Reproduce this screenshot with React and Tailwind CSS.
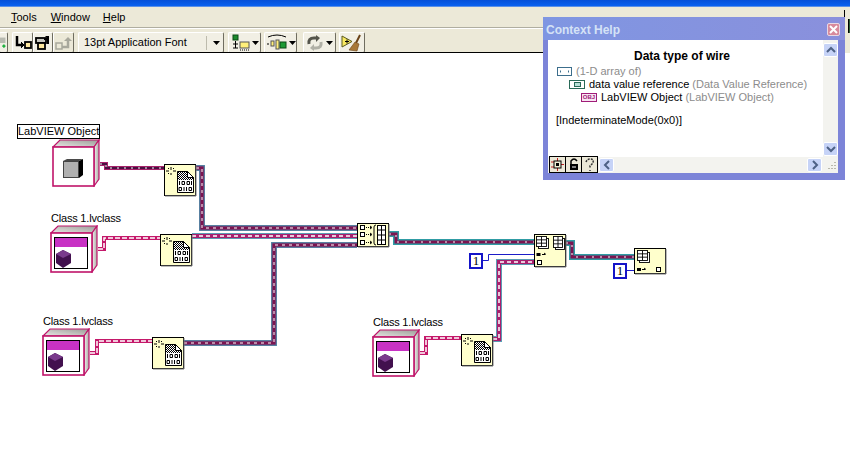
import React from "react";

const WIRE_STYLES = {
  objDark: [
    ["#a8206a", 4, ""],
    ["#4a1040", 2, ""],
    ["#ffffff", 1, "2 5"],
  ],
  obj: [
    ["#c4186a", 4, ""],
    ["#ffffff", 1.5, "5 2"],
  ],
  dvr: [
    ["#4fa0b4", 6, ""],
    ["#62608e", 5, ""],
    ["#7c1450", 3, ""],
    ["#ffffff", 1, "3 4"],
  ],
  dvrLight: [
    ["#5a9cb4", 6, ""],
    ["#a8206e", 4, ""],
    ["#ffffff", 1.5, "4 3"],
  ],
  array: [
    ["#2f9ca4", 6, ""],
    ["#7c1450", 3, ""],
    ["#ffffff", 1, "2 6"],
  ],
};

const Wire = ({ points, kind }) => (
  <>
    {WIRE_STYLES[kind].map(([color, width, dash], i) => (
      <polyline
        key={i}
        points={points}
        fill="none"
        stroke={color}
        strokeWidth={width}
        strokeDasharray={dash}
        strokeLinejoin="miter"
      />
    ))}
  </>
);

const Cube = ({ className, isClass }) => (
  <svg className={className} width="48" height="48" viewBox="0 0 48 48">
    <defs>
      <linearGradient id="sideFace" x1="0" y1="0" x2="1" y2="0">
        <stop offset="0" stopColor="#f2f2ee" />
        <stop offset="1" stopColor="#a9a9a4" />
      </linearGradient>
      <linearGradient id="topFace" x1="0" y1="1" x2="1" y2="0">
        <stop offset="0" stopColor="#e8e8e4" />
        <stop offset="1" stopColor="#9c9c98" />
      </linearGradient>
    </defs>
    <polygon points="1,8 8,1 47,1 42,8" fill="url(#topFace)" stroke="#c0146a" strokeWidth="1.2" />
    <polygon points="42,8 47,1 47,40 42,47" fill="url(#sideFace)" stroke="#c0146a" strokeWidth="1.2" />
    <rect x="1" y="8" width="41" height="39" fill="#ffffff" stroke="#c0146a" strokeWidth="1.6" />
    {isClass ? (
      <>
        <rect x="4.5" y="12.5" width="33" height="31" fill="#ffffff" stroke="#000000" />
        <rect x="5" y="13" width="32" height="9" fill="#c832c4" />
        <polygon points="13,25 21,29 21,38 13,43 6,38 6,29" fill="#42104e" />
        <polygon points="13,25 21,29 13,33 6,29" fill="#7a3a8c" />
      </>
    ) : (
      <>
        <polygon points="11,22 15,20 31,20 27,22" fill="#4a4a4a" />
        <polygon points="27,22 31,20 31,36 27,39" fill="#000000" />
        <rect x="11.5" y="22.5" width="15" height="16" fill="#b0b0b0" stroke="#444444" />
      </>
    )}
  </svg>
);

const DocNode = ({ className }) => (
  <svg className={className} width="33" height="33" viewBox="0 0 33 33">
    <defs>
      <pattern id="dither" width="2" height="2" patternUnits="userSpaceOnUse">
        <rect width="2" height="2" fill="#ffffff" />
        <rect width="1" height="1" fill="#000000" />
        <rect x="1" y="1" width="1" height="1" fill="#000000" />
      </pattern>
    </defs>
    <rect x="0.5" y="0.5" width="31" height="31" fill="#ffffcc" stroke="#000000" />
    <path d="M32 1V32H1" stroke="#777777" fill="none" />
    <path d="M7 3V6M7 9V11M2 7H5M9 7H12M4 4L5 5M10 4L9 5M4 10L5 9" stroke="#000000" />
    <polygon points="13.5,7.5 23.5,7.5 29.5,13.5 29.5,28.5 13.5,28.5" fill="url(#dither)" stroke="#000000" />
    <rect x="14" y="16" width="15" height="12" fill="#ffffff" />
    <path d="M15.500 17V21M18 17.500H20.500V20.500H18ZM23 17.500H25.500V20.500H23ZM27.500 17V21M15 23.500H17.500V26.500H15ZM20 23V27M22.500 23V27M25 23.500H27.500V26.500H25Z" stroke="#000000" fill="none" />
    <polygon points="23.5,7.5 29.5,13.5 23.5,13.5" fill="#ffffff" stroke="#000000" />
  </svg>
);

const Grid = ({ x, y, w = 10, h = 10 }) => (
  <g stroke="#000000" fill="#ffffff" strokeWidth="0.9">
    <rect x={x + 2} y={y + 2} width={w} height={h} />
    <rect x={x} y={y} width={w} height={h} />
    <path d={`M${x} ${y + h / 3}H${x + w}M${x} ${y + (2 * h) / 3}H${x + w}M${x + w / 2} ${y}V${y + h}`} />
  </g>
);

const BuildArrayNode = ({ className }) => (
  <svg className={className} width="33" height="25" viewBox="0 0 33 25">
    <rect x="0.5" y="0.5" width="31" height="23" fill="#ffffcc" stroke="#000000" />
    <path d="M32 1V24H1" stroke="#777777" fill="none" />
    <g fill="#ffffff" stroke="#000000">
      <rect x="3.5" y="2.5" width="4" height="4" />
      <rect x="3.5" y="9.5" width="4" height="4" />
      <rect x="3.5" y="17.5" width="4" height="4" />
    </g>
    <path d="M9 4.5H14M9 11.5H14M9 19.5H14" stroke="#000000" strokeDasharray="1 1" />
    <path d="M13 3l2 1.500-2 1.500M13 10l2 1.500-2 1.500M13 18l2 1.500-2 1.500" stroke="#000000" fill="none" />
    <path d="M19 2Q17 2 17 4V20Q17 22 19 22" stroke="#000000" fill="none" />
    <rect x="20.500" y="2.500" width="8" height="19" fill="#ffffff" stroke="#000000" />
    <path d="M20 7H29M20 12H29M20 17H29M24.500 3V21" stroke="#000000" />
  </svg>
);

const ReshapeNode = ({ className }) => (
  <svg className={className} width="33" height="34" viewBox="0 0 33 34">
    <rect x="0.5" y="0.5" width="31" height="32" fill="#ffffcc" stroke="#000000" />
    <path d="M32 1V33H1" stroke="#777777" fill="none" />
    <Grid x={2.500} y={2.500} />
    <Grid x={19.500} y={2.500} w={9} h={11} />
    <rect x="2.500" y="19" width="4" height="3" fill="#000000" />
    <path d="M8 20.500H11M10 19l2 1.500" stroke="#000000" fill="none" />
    <rect x="3.500" y="26.500" width="4" height="4" fill="#ffffff" stroke="#000000" />
  </svg>
);

const IndexNode = ({ className }) => (
  <svg className={className} width="33" height="27" viewBox="0 0 33 27">
    <rect x="0.5" y="0.5" width="31" height="25" fill="#ffffcc" stroke="#000000" />
    <path d="M32 1V26H1" stroke="#777777" fill="none" />
    <Grid x={3.500} y={2.500} />
    <rect x="3" y="20" width="4" height="3" fill="#000000" />
    <path d="M8 21.500H11M10 20l2 1.500" stroke="#000000" fill="none" />
    <rect x="22.500" y="19.500" width="4" height="4" fill="#ffffff" stroke="#000000" />
  </svg>
);

const Label = ({ className, children }) => (
  <span className={`absolute text-[11px] tracking-[-0.2px] leading-[15px] text-black whitespace-nowrap ${className}`}>
    {children}
  </span>
);

const NumConst = ({ className }) => (
  <div
    className={`absolute w-[14px] h-[16px] border-2 border-[#1414c8] bg-white flex items-center justify-center text-[13px] font-['Liberation_Serif',serif] text-black ${className}`}
  >
    1
  </div>
);

const ToolButton = ({ className = "", children }) => (
  <div
    className={`h-[21px] flex items-center justify-center rounded-[2px] border-t border-l border-white border-r border-b border-r-[#6f6d60] border-b-[#44423a] bg-[#f1efe4] ${className}`}
  >
    {children}
  </div>
);

const Caret = () => (
  <svg width="7" height="4" viewBox="0 0 7 4">
    <polygon points="0,0 7,0 3.500,4" fill="#000000" />
  </svg>
);

const Toolbar = () => (
  <div className="h-[24px] bg-[#ece9d8] flex items-start pt-[3px] border-t border-t-white">
    <ToolButton className="w-[9px] -ml-px overflow-hidden">
      <svg width="9" height="18" viewBox="0 0 9 18">
        <rect x="0" y="2" width="7" height="7" fill="#b8bab0" />
        <path d="M3 13H7M5 11V15" stroke="#20b040" strokeWidth="2" />
      </svg>
    </ToolButton>
    <div className="w-[4px]" />
    <ToolButton className="w-[21px]">
      <svg width="18" height="16" viewBox="0 0 18 16">
        <path d="M3 1V10H8" stroke="#000000" strokeWidth="2.500" fill="none" />
        <path d="M7 7l3 3-3 3" fill="#000000" stroke="#000000" />
        <rect x="11" y="7" width="6" height="6" fill="#ffe9a0" stroke="#000000" strokeWidth="1.800" />
      </svg>
    </ToolButton>
    <ToolButton className="w-[20px]">
      <svg width="18" height="16" viewBox="0 0 18 16">
        <rect x="2" y="3" width="10" height="5" fill="#c8c8c0" stroke="#000000" strokeWidth="1.800" />
        <rect x="4" y="8" width="7" height="6" fill="#ffe9a0" stroke="#000000" strokeWidth="1.800" />
        <path d="M10 4H14V9" stroke="#000000" strokeWidth="2" fill="none" />
        <path d="M11 1l4-0v4z" fill="#000000" />
      </svg>
    </ToolButton>
    <ToolButton className="w-[21px] border-transparent bg-transparent">
      <svg width="18" height="16" viewBox="0 0 18 16">
        <rect x="1" y="8" width="6" height="6" fill="none" stroke="#a8a89c" strokeWidth="1.500" />
        <path d="M7 12H13V5" stroke="#a8a89c" strokeWidth="2.500" fill="none" />
        <path d="M9 6l4-4 4 4z" fill="#a8a89c" />
      </svg>
    </ToolButton>
    <div className="w-[4px]" />
    <ToolButton className="w-[146px] pl-[5px] pr-[3px]">
      <span className="text-[11px] text-black whitespace-nowrap">13pt Application Font</span>
      <span className="ml-auto flex items-center gap-[6px]">
        <span className="w-px h-[14px] bg-[#bdbbad]" />
        <Caret />
      </span>
    </ToolButton>
    <div className="w-[4px]" />
    <ToolButton className="w-[33px] gap-[1px]">
      <svg width="20" height="17" viewBox="0 0 20 17">
        <rect x="2" y="1" width="5" height="5" fill="#1c8a2c" stroke="#0a4a14" />
        <path d="M4.500 7V14M2 10H7M2 14H7" stroke="#000000" />
        <rect x="9" y="8" width="9" height="6" fill="#fff07a" stroke="#555555" />
        <path d="M9 16H18" stroke="#000000" strokeDasharray="1 1" />
      </svg>
      <Caret />
    </ToolButton>
    <div className="w-[3px]" />
    <ToolButton className="w-[33px] gap-[1px]">
      <svg width="22" height="17" viewBox="0 0 22 17">
        <path d="M2 3Q11 -1 20 3" stroke="#000000" fill="none" />
        <rect x="5" y="7" width="3" height="5" fill="#fff07a" stroke="#555555" />
        <rect x="10" y="6" width="3" height="9" fill="#fff07a" stroke="#555555" />
        <rect x="14" y="8" width="6" height="6" fill="#1c9a34" stroke="#0a4a14" />
        <path d="M1 10H3" stroke="#000000" />
      </svg>
      <Caret />
    </ToolButton>
    <div className="w-[6px]" />
    <ToolButton className="w-[33px] gap-[2px]">
      <svg width="18" height="16" viewBox="0 0 18 16">
        <path d="M3 9Q2 3 8 3H11" stroke="#55554c" strokeWidth="3" fill="none" />
        <path d="M10 0V7L14 3z" fill="#55554c" />
        <path d="M15 7Q16 13 10 13H7" stroke="#b0b0a6" strokeWidth="3" fill="none" />
        <path d="M8 9V16L4 13z" fill="#b0b0a6" />
      </svg>
      <Caret />
    </ToolButton>
    <div className="w-[3px]" />
    <ToolButton className="w-[26px]">
      <svg width="22" height="18" viewBox="0 0 22 18">
        <polygon points="1,2 1,13 11,7.500" fill="#f8e860" stroke="#5a5a20" />
        <path d="M4 7.500H8M6 5.500V9.500" stroke="#000000" />
        <path d="M19 1L15 9" stroke="#6a4218" strokeWidth="2" />
        <polygon points="14,8 18,10 16,17 8,16" fill="#a87838" stroke="#6a4218" strokeWidth="0.6" />
      </svg>
    </ToolButton>
  </div>
);

const HelpIcon = ({ className, border, children }) => (
  <span
    className={`absolute h-[9px] border flex items-center justify-center ${border} ${className}`}
  >
    {children}
  </span>
);

const ScrollArrow = ({ className, d }) => (
  <div className={`absolute flex items-center justify-center rounded-[2px] border border-white bg-[#c6d3f7] ${className}`}>
    <svg width="10" height="10" viewBox="0 0 10 10">
      <path d={d} stroke="#4d6185" strokeWidth="2" fill="none" />
    </svg>
  </div>
);

const ContextHelp = () => (
  <div className="absolute left-[543px] top-[17px] w-[302px] h-[163px] bg-[#7c84d8] rounded-t-[4px] font-['Liberation_Sans',sans-serif]">
    <div className="h-[23px] flex items-center justify-between pl-[3px] pr-[5px] pt-[2px] bg-gradient-to-r from-[#7f96e2] to-[#8a90dc]">
      <span className="text-[12px] font-bold text-[#d5e2f6]">Context Help</span>
      <div className="w-[13px] h-[13px] rounded-[2px] bg-[#d88a9c] border border-[#e8d8e4] flex items-center justify-center">
        <svg width="9" height="9" viewBox="0 0 9 9">
          <path d="M1 1L8 8M8 1L1 8" stroke="#ffffff" strokeWidth="2" />
        </svg>
      </div>
    </div>
    <div className="absolute left-[5px] top-[23px] w-[290px] h-[133px] bg-white text-[11px] leading-[15px] text-black overflow-hidden">
      <div className="absolute left-0 w-[265px] top-[9px] text-center text-[12px] font-bold pl-[3px]">
        Data type of wire
      </div>
      <HelpIcon className="left-[9px] top-[27px] w-[15px]" border="border-[#3c6e8c]">
        <span className="w-[9px] h-[3px] border border-x-[#3c6e8c] border-y-transparent" />
      </HelpIcon>
      <span className="absolute left-[28px] top-[24px] text-[#8c8c8c] whitespace-nowrap">(1-D array of)</span>
      <HelpIcon className="left-[21px] top-[40px] w-[16px]" border="border-[#2a6a58]">
        <span className="w-[7px] h-[5px] bg-[#b8e0d8] border border-[#2a6a58]" />
      </HelpIcon>
      <span className="absolute left-[41px] top-[37px] whitespace-nowrap">
        data value reference <span className="text-[#8c8c8c]">(Data Value Reference)</span>
      </span>
      <HelpIcon className="left-[33px] top-[53px] w-[16px] bg-[#f8e4f2] text-[6px] leading-[7px] font-bold text-[#a01c78] overflow-hidden" border="border-[#a01c78]">
        OBJ
      </HelpIcon>
      <span className="absolute left-[53px] top-[50px] whitespace-nowrap">
        LabVIEW Object <span className="text-[#8c8c8c]">(LabVIEW Object)</span>
      </span>
      <span className="absolute left-[8px] top-[73px] whitespace-nowrap">[IndeterminateMode(0x0)]</span>

      <div className="absolute left-[275px] top-0 w-[15px] h-[133px] bg-[#f3f3ef]" />
      <ScrollArrow className="left-[275px] top-[3px] w-[15px] h-[14px]" d="M1 7L5 3L9 7" />
      <ScrollArrow className="left-[275px] top-[102px] w-[15px] h-[14px]" d="M1 3L5 7L9 3" />

      <div className="absolute left-0 top-[117px] w-[290px] h-[16px] bg-[#f3f3ef]" />
      <div className="absolute left-[1px] top-[116px] w-[49px] h-[17px] flex border border-black bg-[#ece9d8]">
        <div className="flex-1 border-r border-black flex items-center justify-center">
          <svg width="13" height="13" viewBox="0 0 13 13">
            <path d="M0 4H3M0 9H3M10 6.500H13M6.500 0V13" stroke="#c02020" />
            <rect x="3" y="3" width="7" height="7" fill="#f0f0d8" stroke="#000000" />
            <rect x="5" y="5" width="3" height="3" fill="#000000" />
          </svg>
        </div>
        <div className="flex-1 border-r border-black flex items-center justify-center">
          <svg width="12" height="13" viewBox="0 0 12 13">
            <path d="M3 6V3Q6 -1 9 3" stroke="#000000" strokeWidth="1.500" fill="none" />
            <rect x="2" y="6" width="8" height="6" fill="#000000" />
            <path d="M4 9H8" stroke="#ffffff" />
          </svg>
        </div>
        <div className="flex-1 flex items-center justify-center">
          <svg width="12" height="14" viewBox="0 0 12 14">
            <path d="M2 4Q3 1 6 1Q10 1 9 5L6 8V10M6 12V13" stroke="#333333" strokeWidth="1.500" strokeDasharray="2 1" fill="none" />
          </svg>
        </div>
      </div>
      <ScrollArrow className="left-[51px] top-[118px] w-[15px] h-[14px]" d="M7 1L3 5L7 9" />
      <ScrollArrow className="left-[259px] top-[118px] w-[15px] h-[14px]" d="M3 1L7 5L3 9" />
      <svg className="absolute left-[279px] top-[121px]" width="10" height="10" viewBox="0 0 10 10">
        <path d="M8 1V2M5 4V5M8 4V5M2 7V8M5 7V8M8 7V8" stroke="#b8b8ac" strokeWidth="2" />
      </svg>
    </div>
  </div>
);

export default function App() {
  return (
    <div className="relative w-[850px] h-[451px] overflow-hidden bg-white flex flex-col font-['Liberation_Sans',sans-serif]">
      <div className="h-[7px] bg-gradient-to-b from-[#0550d8] to-[#0a62f0] border-b border-b-[#5a90e8]" />
      <div className="h-[21px] bg-[#ece9d8] flex items-center text-[11px] text-black border-b border-b-[#b0aea0]">
        <span className="ml-[11px]"><u>T</u>ools</span>
        <span className="ml-[14px]"><u>W</u>indow</span>
        <span className="ml-[13px]"><u>H</u>elp</span>
      </div>
      <Toolbar />
      <div className="h-px bg-black" />

      <div className="relative flex-1">
        <svg className="absolute left-0 top-0" width="850" height="398" viewBox="0 53 850 398">
          <Wire kind="objDark" points="100,164 106,164 106,168 164,168" />
          <Wire kind="dvr" points="196,168 202,168 202,228 357,228" />
          <Wire kind="obj" points="98,249 104,249 104,238 160,238" />
          <Wire kind="dvrLight" points="192,236 357,236" />
          <Wire kind="obj" points="90,353 97,353 97,341 152,341" />
          <Wire kind="dvr" points="184,343 274,343 274,245 357,245" />
          <Wire kind="array" points="389,234 396,234 396,242 534,242" />
          <Wire kind="obj" points="420,353 426,353 426,338 461,338" />
          <Wire kind="dvrLight" points="493,339 499,339 499,262 534,262" />
          <Wire kind="array" points="566,243 572,243 572,257 634,257" />
          <polyline points="482,260.5 488.5,260.5 488.5,254.5 534,254.5" fill="none" stroke="#1c1cc8" />
          <polyline points="626,270.5 634,270.5" fill="none" stroke="#1c1cc8" />
        </svg>

        <div className="absolute left-[17px] top-[71px] w-[83px] h-[15px] border border-black bg-white text-[11px] leading-[13px] text-center whitespace-nowrap">
          LabVIEW Object
        </div>
        <Cube className="absolute left-[52px] top-[86px]" />
        <Label className="left-[51px] top-[158px]">Class 1.lvclass</Label>
        <Cube className="absolute left-[50px] top-[172px]" isClass />
        <Label className="left-[43px] top-[261px]">Class 1.lvclass</Label>
        <Cube className="absolute left-[42px] top-[275px]" isClass />
        <Label className="left-[373px] top-[262px]">Class 1.lvclass</Label>
        <Cube className="absolute left-[372px] top-[276px]" isClass />

        <DocNode className="absolute left-[164px] top-[111px]" />
        <DocNode className="absolute left-[160px] top-[181px]" />
        <DocNode className="absolute left-[152px] top-[284px]" />
        <DocNode className="absolute left-[461px] top-[281px]" />
        <BuildArrayNode className="absolute left-[357px] top-[170px]" />
        <ReshapeNode className="absolute left-[534px] top-[181px]" />
        <IndexNode className="absolute left-[634px] top-[195px]" />
        <NumConst className="left-[469px] top-[200px]" />
        <NumConst className="left-[613px] top-[210px]" />
      </div>

      <div className="absolute left-[844px] top-[10px] w-[6px] h-[43px] bg-[#ece9d8] border-l border-l-black">
        <div className="mt-[9px] ml-[3px] w-[3px] h-[14px] bg-[#2a5a30] border-l border-black" />
      </div>
      <ContextHelp />
    </div>
  );
}
